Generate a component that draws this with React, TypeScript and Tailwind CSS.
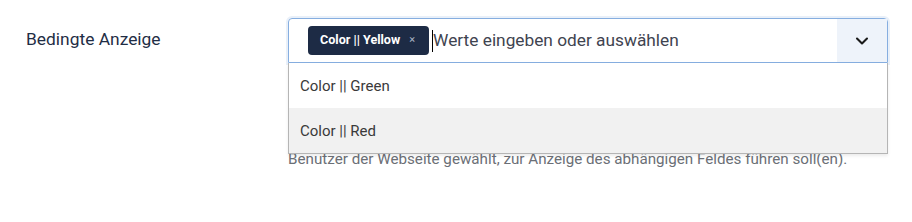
import { ChevronDown } from "lucide-react";

const options = ["Color || Green", "Color || Red"];

export default function App() {
  return (
    <div className="min-h-[222px] bg-white font-['Roboto','Liberation_Sans',sans-serif]">
      <div className="flex pt-[18px] pl-[26px]">
        <label className="w-[262px] pt-[10px] text-[17.4px] leading-[22px] text-[#1f2d45]">
          Bedingte Anzeige
        </label>

        <div className="w-[600px]">
          <div className="relative">
            {/* input */}
            <div className="flex h-[45px] items-stretch rounded-t-[4px] border border-[#86aee0] shadow-[0_0_0_2px_rgba(134,174,224,0.18)]">
              <div className="flex flex-1 items-center pl-[19px]">
                <span className="flex h-[29px] items-center gap-[9px] rounded-[4px] bg-[#1d2b45] pl-[12px] pr-[14px] text-[12.6px] font-bold text-white">
                  Color || Yellow
                  <span className="text-[11px] font-normal text-[#aab4c3]">×</span>
                </span>
                <span className="ml-[3px] h-[22px] w-px bg-black" />
                <span className="text-[17.3px] text-[#3f4450]">Werte eingeben oder auswählen</span>
              </div>
              <div className="flex w-[50px] items-center justify-center bg-[#eef3fa]">
                <ChevronDown className="h-5 w-5 text-[#1a1a1a]" strokeWidth={2.5} />
              </div>
            </div>

            {/* dropdown */}
            <ul className="absolute left-0 right-0 top-[45px] z-10 border border-t-0 border-[#b5b5b5] bg-white shadow-[0_2px_3px_rgba(0,0,0,0.08)]">
              {options.map((o, i) => (
                <li
                  key={o}
                  className={`flex h-[45px] items-center px-[11px] pt-[2px] text-[15px] text-[#3a3a3a] ${i === 1 ? "bg-[#f1f1f1]" : ""}`}
                >
                  {o}
                </li>
              ))}
            </ul>
          </div>

          <p className="mt-[86px] text-[15.2px] leading-[20px] text-[#6b6f76]">
            Benutzer der Webseite gewählt, zur Anzeige des abhängigen Feldes führen soll(en).
          </p>
        </div>
      </div>
    </div>
  );
}
